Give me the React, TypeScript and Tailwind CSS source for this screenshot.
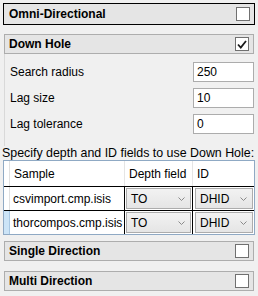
import React from 'react'

const font = { fontFamily: '"Liberation Sans", Arial, sans-serif' }

const Check = ({ checked }: { checked?: boolean }) => (
  <div className="w-[14px] h-[14px] border border-[#707070] bg-white flex items-center justify-center">
    {checked && (
      <svg width="10" height="9" viewBox="0 0 10 9">
        <path d="M1 4.5 L3.8 7.5 L9 1" fill="none" stroke="#1a1a1a" strokeWidth="1.8" />
      </svg>
    )}
  </div>
)

const Section = ({ title, checked, focused }: { title: string; checked?: boolean; focused?: boolean }) => (
  <div
    className={
      focused
        ? 'h-[22px] border border-black bg-[#e5e5e5] flex items-center justify-between pl-[5px] pr-[4px]'
        : 'h-[20px] mx-[1px] border border-[#adadad] bg-[#e5e5e5] flex items-center justify-between pl-[4px] pr-[4px]'
    }
  >
    <span className="text-[12px] font-bold text-black">{title}</span>
    <Check checked={checked} />
  </div>
)

const Field = ({ label, value }: { label: string; value: string }) => (
  <div className="flex items-center justify-between h-[20px]">
    <span className="text-[12px] text-black">{label}</span>
    <div className="w-[61px] h-[20px] border border-[#acacac] bg-white text-[12px] leading-[18px] pl-[3px] text-black">{value}</div>
  </div>
)

const Combo = ({ value }: { value: string }) => (
  <div className="h-[21px] border border-[#acacac] bg-gradient-to-b from-[#f2f2f2] to-[#e5e5e5] flex items-center justify-between pl-[4px] pr-[5px]">
    <span className="text-[12px] text-black">{value}</span>
    <svg width="7" height="4" viewBox="0 0 7 4">
      <path d="M0.5 0.5 L3.5 3.5 L6.5 0.5" fill="none" stroke="#8a8a8a" strokeWidth="1" />
    </svg>
  </div>
)

const rows = [
  { sample: 'csvimport.cmp.isis', depth: 'TO', id: 'DHID', current: false },
  { sample: 'thorcompos.cmp.isis', depth: 'TO', id: 'DHID', current: true },
]

export default function App() {
  return (
    <div className="w-[258px] h-[296px] bg-[#f0f0f0] pt-[3px] px-[3px] overflow-hidden" style={font}>
      <Section title="Omni-Directional" focused />
      <div className="mt-[9px]">
        <Section title="Down Hole" checked />
      </div>
      <div className="ml-[1px] border-l border-[#d9d9d9] pl-[5px] pr-[1px] pt-[8px] pb-[12px] flex flex-col gap-[6px]">
        <Field label="Search radius" value="250" />
        <Field label="Lag size" value="10" />
        <Field label="Lag tolerance" value="0" />
      </div>
      <div className="text-[12.4px] text-black leading-[14px] whitespace-nowrap -ml-[1px]">Specify depth and ID fields to use Down Hole:</div>
      <div className="border border-[#8fa9c4] w-[252px] bg-white">
        <div className="flex h-[25px] bg-white">
          <div className="w-[6px] border-r border-[#e0e0e0]" />
          <div className="w-[115px] border-r border-[#e5e5e5] pl-[4px] flex items-center text-[12px]">Sample</div>
          <div className="w-[68px] border-r border-[#e5e5e5] pl-[4px] flex items-center text-[12px]">Depth field</div>
          <div className="flex-1 pl-[4px] flex items-center text-[12px]">ID</div>
        </div>
        {rows.map((r) => (
          <div key={r.sample} className="flex h-[24px] border-t border-black">
            <div className={r.current ? 'w-[6px] bg-[#cce4f7] border-r border-[#a9c8e3]' : 'w-[6px] bg-white border-r border-[#e0e0e0]'} />
            <div className="w-[115px] border-r border-black pl-[3px] flex items-center text-[12px] bg-white">{r.sample}</div>
            <div className="w-[68px] border-r border-black px-[1px] pt-[1px]">
              <Combo value={r.depth} />
            </div>
            <div className="flex-1 pl-[2px] pr-[1px] pt-[1px]">
              <Combo value={r.id} />
            </div>
          </div>
        ))}
      </div>
      <div className="mt-[6px]">
        <Section title="Single Direction" />
      </div>
      <div className="mt-[10px]">
        <Section title="Multi Direction" />
      </div>
    </div>
  )
}
